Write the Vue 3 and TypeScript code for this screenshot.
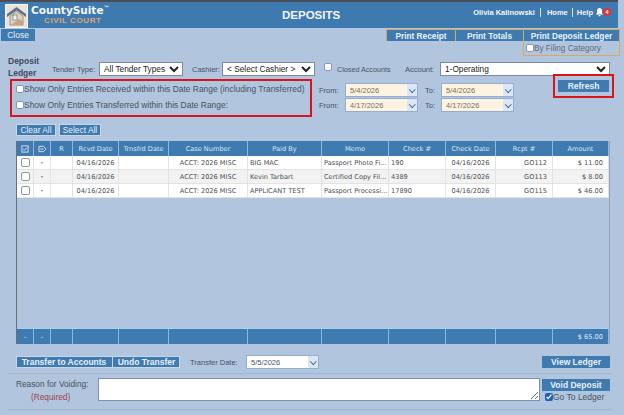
<script setup lang="ts">
const columns = [
  { label: "R", key: "r" },
  { label: "Rcvd Date", key: "rcvd" },
  { label: "Trnsfrd Date", key: "trnsfrd" },
  { label: "Case Number", key: "caseNo" },
  { label: "Paid By", key: "paidBy" },
  { label: "Memo", key: "memo" },
  { label: "Check #", key: "check" },
  { label: "Check Date", key: "checkDate" },
  { label: "Rcpt #", key: "rcpt" },
  { label: "Amount", key: "amount" },
]

const rows = [
  { id: 1, rcvd: "04/16/2026", caseNo: "ACCT: 2026 MISC", paidBy: "BIG MAC", memo: "Passport Photo Fi...", check: "190", checkDate: "04/16/2026", rcpt: "GO112", amount: "$ 11.00" },
  { id: 2, rcvd: "04/16/2026", caseNo: "ACCT: 2026 MISC", paidBy: "Kevin Tarbart", memo: "Certified Copy Fil...", check: "4389", checkDate: "04/16/2026", rcpt: "GO113", amount: "$ 8.00" },
  { id: 3, rcvd: "04/16/2026", caseNo: "ACCT: 2026 MISC", paidBy: "APPLICANT TEST", memo: "Passport Processi...", check: "17890", checkDate: "04/16/2026", rcpt: "GO115", amount: "$ 46.00" },
]

const dateRows = [
  { from: "5/4/2026", to: "5/4/2026" },
  { from: "4/17/2026", to: "4/17/2026" },
]
</script>

<template>
  <div class="page">
    <header class="topbar">
      <div class="brand">
        <svg class="logo" viewBox="0 0 23 24" width="23" height="24">
          <rect x="0.5" y="0.5" width="22" height="23" fill="#e9e4da" stroke="#f4f6f8" />
          <path d="M2 10 L11.5 3 L21 10 L21 13 L11.5 6.5 L2 13 Z" fill="#65727f" />
          <path d="M5 12 L11.5 7.5 L18 12 L18 21 L5 21 Z" fill="#e2d3bf" stroke="#7b818b" stroke-width="0.8" />
          <rect x="8" y="11" width="4" height="5" fill="#f6f3ec" stroke="#6d7480" stroke-width="0.7" />
          <path d="M6 21 L14 15 L18 17 L18 21 Z" fill="#c9a382" />
        </svg>
        <div class="brand-text">
          <div class="brand-name">CountySuite<sup>™</sup></div>
          <div class="brand-sub">CIVIL COURT</div>
        </div>
      </div>
      <div class="page-title">DEPOSITS</div>
      <nav class="usernav">
        <a>Olivia Kalinowski</a>
        <span class="sep"></span>
        <a>Home</a>
        <span class="sep sep-tight"></span>
        <a>Help</a>
        <svg class="bell" viewBox="0 0 10 11" width="9" height="10">
          <path d="M5 1 C7 1 7.8 2.6 7.8 4.5 L7.8 6.8 L9 8.2 L1 8.2 L2.2 6.8 L2.2 4.5 C2.2 2.6 3 1 5 1 Z" fill="#fff" />
          <rect x="4" y="8.8" width="2" height="1.4" fill="#fff" />
        </svg>
        <span class="badge">4</span>
      </nav>
    </header>

    <div class="toolbar">
      <button class="btn close-btn">Close</button>
      <div class="print-group">
        <div class="print-tabs">
          <button class="print-tab tab-receipt">Print Receipt</button>
          <button class="print-tab tab-totals">Print Totals</button>
          <button class="print-tab tab-ledger">Print Deposit Ledger</button>
        </div>
        <label class="filing"><input type="checkbox" />By Filing Category</label>
      </div>
    </div>

    <div class="filters">
      <div class="ledger-title">Deposit<br />Ledger</div>
      <label class="flabel tender-label">Tender Type:</label>
      <select class="sel tender"><option>All Tender Types</option></select>
      <label class="flabel cashier-label">Cashier:</label>
      <select class="sel cashier"><option>&lt; Select Cashier &gt;</option></select>
      <input class="closed-check" type="checkbox" />
      <label class="flabel closed-label">Closed Accounts</label>
      <label class="flabel account-label">Account:</label>
      <select class="sel account"><option>1-Operating</option></select>
    </div>

    <div class="range-row">
      <div class="red-box range-box">
        <label class="range-opt"><input type="checkbox" />Show Only Entries Received within this Date Range (including Transferred)</label>
        <label class="range-opt"><input type="checkbox" />Show Only Entries Transferred within this Date Range:</label>
      </div>
      <div class="dates">
        <div v-for="d in dateRows" :key="d.from" class="date-line">
          <span class="flabel from-label">From:</span>
          <div class="date-input"><span>{{ d.from }}</span><i class="chev"></i></div>
          <span class="flabel to-label">To:</span>
          <div class="date-input"><span>{{ d.to }}</span><i class="chev"></i></div>
        </div>
      </div>
      <div class="red-box refresh-box">
        <button class="btn refresh">Refresh</button>
      </div>
    </div>

    <div class="select-actions">
      <button class="btn outlined clear">Clear All</button>
      <button class="btn outlined select-all">Select All</button>
    </div>

    <section class="grid">
      <div class="grid-row grid-head">
        <div class="cell center">
          <svg viewBox="0 0 9 9" width="8" height="8"><rect x="1" y="1" width="7" height="7" fill="none" stroke="#dfe9f3" /><path d="M2.5 4.5 L4 6 L6.5 3" fill="none" stroke="#dfe9f3" /></svg>
        </div>
        <div class="cell center">
          <svg viewBox="0 0 10 9" width="9" height="8"><path d="M1 1.5 H6 L9 4.5 L6 7.5 H1 Z" fill="none" stroke="#dfe9f3" /><path d="M2.5 4.5 H6" stroke="#dfe9f3" /></svg>
        </div>
        <div v-for="c in columns" :key="c.key" class="cell center">{{ c.label }}</div>
      </div>
      <div v-for="r in rows" :key="r.id" class="grid-row grid-line">
        <div class="cell center"><input class="row-check" type="checkbox" /></div>
        <div class="cell center dot">·</div>
        <div class="cell"></div>
        <div class="cell center">{{ r.rcvd }}</div>
        <div class="cell"></div>
        <div class="cell center">{{ r.caseNo }}</div>
        <div class="cell">{{ r.paidBy }}</div>
        <div class="cell">{{ r.memo }}</div>
        <div class="cell">{{ r.check }}</div>
        <div class="cell center">{{ r.checkDate }}</div>
        <div class="cell right">{{ r.rcpt }}</div>
        <div class="cell right">{{ r.amount }}</div>
      </div>
      <div class="grid-row grid-foot">
        <div class="cell center">-</div>
        <div class="cell center">-</div>
        <div v-for="n in 9" :key="n" class="cell"></div>
        <div class="cell right">$ 65.00</div>
      </div>
    </section>

    <div class="transfer-row">
      <div class="transfer-btns">
        <button class="btn strong transfer">Transfer to Accounts</button>
        <button class="btn strong undo">Undo Transfer</button>
      </div>
      <label class="flabel transfer-label">Transfer Date:</label>
      <div class="date-input transfer-date"><span>5/5/2026</span><i class="chev"></i></div>
      <button class="btn strong view-ledger">View Ledger</button>
    </div>

    <div class="void-row">
      <div class="void-label">
        <div>Reason for Voiding:</div>
        <div class="required">(Required)</div>
      </div>
      <textarea class="void-text"></textarea>
      <div class="void-side">
        <button class="btn strong void-btn">Void Deposit</button>
        <label class="go-ledger"><input type="checkbox" checked />Go To Ledger</label>
      </div>
    </div>
  </div>
</template>

<style scoped>
.page {
  width: 624px;
  height: 415px;
  overflow: hidden;
  background: #b1c5de;
  font-family: "Liberation Sans", Arial, sans-serif;
  color: #44505f;
  display: flex;
  flex-direction: column;
}

button {
  border: 0;
  padding: 0;
  font-family: inherit;
  cursor: pointer;
}

input[type="checkbox"] {
  appearance: none;
  width: 8px;
  height: 8px;
  margin: 0;
  flex: none;
  background: #fff;
  border: 1px solid #8d97a5;
  border-radius: 2px;
  box-sizing: border-box;
}

/* top bar */
.topbar {
  height: 26px;
  margin-right: 6px;
  border-top: 2px solid #4b4f55;
  background: #3e7ab0;
  display: flex;
  align-items: center;
  flex: none;
}

.brand {
  display: flex;
  align-items: center;
  padding-left: 5px;
  width: 223px;
}

.logo {
  margin-top: 1px;
}

.brand-text {
  margin-left: 3px;
}

.brand-name {
  font-family: "DejaVu Sans", Verdana, sans-serif;
  font-size: 10.5px;
  font-weight: 700;
  line-height: 12px;
  color: #f3f7fb;
}

.brand-name sup {
  font-size: 6px;
  line-height: 0;
  vertical-align: 4px;
}

.brand-sub {
  margin-left: 13px;
  font-size: 8px;
  font-weight: 700;
  line-height: 10px;
  color: #d9a772;
  letter-spacing: 0.6px;
}

.page-title {
  margin-left: 54px;
  font-size: 11.5px;
  font-weight: 700;
  color: #f3f7fb;
}

.usernav {
  margin-left: auto;
  margin-right: 7px;
  margin-top: -6px;
  display: flex;
  align-items: center;
  font-size: 7.5px;
  font-weight: 700;
  color: #f3f7fb;
}

.sep {
  width: 1px;
  height: 9px;
  margin: 0 5.5px;
  background: #d9e4ef;
}

.sep-tight {
  margin: 0 4px;
}

.bell {
  margin-left: 2px;
}

.badge {
  width: 8px;
  height: 8px;
  margin-left: -1px;
  border-radius: 50%;
  background: #e0333a;
  color: #fff;
  font-size: 5.5px;
  line-height: 8px;
  text-align: center;
}

.btn {
  background: #3f7bb1;
  color: #e9f0f7;
  display: block;
}

/* close + print */
.toolbar {
  height: 28px;
  flex: none;
  display: flex;
  justify-content: space-between;
  padding: 1px 4px 0 1px;
  box-sizing: border-box;
}

.close-btn {
  width: 34px;
  height: 12px;
  font-size: 8.5px;
}

.print-group {
  width: 234px;
}

.print-tabs {
  display: flex;
  height: 12px;
}

.print-tab {
  background: #3f7bb1;
  color: #e9f0f7;
  font-size: 8.3px;
  font-weight: 700;
  border-left: 1px solid #d7a95e;
  border-top: 1px solid #d7a95e;
  box-sizing: border-box;
}

.tab-receipt { width: 69px; }
.tab-totals { width: 68px; }
.tab-ledger { width: 97px; border-right: 1px solid #d7a95e; }

.filing {
  display: flex;
  align-items: center;
  width: 97px;
  height: 15px;
  margin-left: 137px;
  padding-left: 2px;
  box-sizing: border-box;
  border: 1px solid #d7a95e;
  border-top: 0;
  font-size: 8.2px;
  color: #5b6a7c;
}

/* filter row */
.filters {
  height: 23px;
  flex: none;
  display: flex;
  align-items: flex-start;
  padding: 0 0 0 8px;
  box-sizing: border-box;
}

.ledger-title {
  width: 34px;
  margin-top: -1px;
  font-size: 8.5px;
  font-weight: 700;
  line-height: 12px;
  color: #3f4b5a;
}

.flabel {
  font-size: 7.5px;
  color: #47535f;
  white-space: nowrap;
}

.tender-label { margin: 9px 0 0 10px; width: 47px; }
.cashier-label { margin: 9px 0 0 9px; width: 30px; }
.closed-label { margin: 9px 0 0 5px; width: 68px; font-size: 7.2px; }
.account-label { margin: 9px 0 0 0; width: 35px; }

.sel {
  height: 14px;
  margin-top: 6px;
  padding: 0;
  border: 1px solid #7b8a9e;
  border-radius: 0;
  background-color: #fff;
  font-family: "Liberation Sans", Arial, sans-serif;
  font-size: 8.3px;
  color: #222;
  box-sizing: border-box;
}

.tender { width: 84px; }
.cashier { width: 93px; }
.account { width: 170px; }

.closed-check {
  margin: 7px 0 0 9px !important;
}

/* date range */
.range-row {
  height: 45px;
  flex: none;
  display: flex;
  align-items: flex-start;
  padding-left: 10px;
  box-sizing: border-box;
}

.red-box {
  border: 2px solid #d8141c;
  box-sizing: border-box;
}

.range-box {
  width: 302px;
  height: 38px;
  padding: 0 0 0 4px;
  display: flex;
  flex-direction: column;
  gap: 1px;
}

.range-opt {
  display: flex;
  align-items: center;
  height: 15px;
  font-size: 8.45px;
  color: #47535f;
  white-space: nowrap;
}

.dates {
  margin: 4px 0 0 7px;
  width: 195px;
  display: flex;
  flex-direction: column;
  gap: 1px;
}

.date-line {
  display: flex;
  align-items: center;
  height: 14px;
}

.from-label { width: 26px; }
.to-label { width: 16px; margin-left: 7px; }

.date-input {
  width: 73px;
  height: 14px;
  display: flex;
  align-items: center;
  justify-content: space-between;
  box-sizing: border-box;
  padding-left: 4px;
  border: 1px solid #93aed2;
  background: #fdf3e1;
  font-size: 7.5px;
  color: #77705f;
}

.chev {
  width: 10px;
  height: 12px;
  background: #dbe7f6;
  position: relative;
  display: block;
}

.chev::after {
  content: "";
  position: absolute;
  left: 2.5px;
  top: 2.5px;
  width: 3.5px;
  height: 3.5px;
  border-right: 1.5px solid #3d6ea5;
  border-bottom: 1.5px solid #3d6ea5;
  transform: rotate(45deg);
}

.refresh-box {
  width: 61px;
  height: 24px;
  margin: -5px 0 0 39px;
  padding: 4px 3px 0 3px;
}

.refresh {
  width: 51px;
  height: 12px;
  font-size: 8.5px;
  font-weight: 700;
}

/* clear / select */
.select-actions {
  height: 17px;
  flex: none;
  display: flex;
  gap: 3px;
  padding-left: 16px;
  box-sizing: border-box;
}

.outlined {
  height: 12px;
  font-size: 8.4px;
  outline: 1px solid #c7d7ea;
  outline-offset: -1px;
}

.clear { width: 40px; }
.select-all { width: 42px; }

/* table */
.grid {
  width: 594px;
  height: 203px;
  margin-left: 16px;
  flex: none;
  display: flex;
  flex-direction: column;
  box-sizing: border-box;
  border-left: 1px solid #66717f;
  border-right: 1px solid #95a2b3;
  background: #b1c5de;
  font-family: "DejaVu Sans", Verdana, sans-serif;
  font-size: 6.6px;
}

.grid-row {
  display: grid;
  grid-template-columns: 17px 17px 22px 46px 50px 79px 74px 67px 57px 50px 57px 1fr;
}

.grid-head {
  height: 15px;
  flex: none;
  background: #3f7bb1;
  color: #dbe7f2;
}

.grid-head .cell {
  border-right: 1px solid #8fb8dc;
  overflow: visible;
  white-space: nowrap;
}

.grid-line {
  height: 14px;
  flex: none;
  background: #fff;
  color: #4a4f55;
}

.grid-line:nth-of-type(3) {
  background: #f2f2f2;
}

.grid-line .cell {
  border-right: 1px solid #e3e3e3;
  border-bottom: 1px solid #e3e3e3;
}

.grid-foot {
  height: 15px;
  flex: none;
  margin-top: auto;
  background: #3f7bb1;
  color: #e1ebf4;
  border-top: 1px solid #a5d0f2;
}

.grid-foot .cell {
  border-right: 1px solid #8fb8dc;
}

.cell {
  display: flex;
  align-items: center;
  padding: 0 2px;
  box-sizing: border-box;
  overflow: hidden;
  white-space: nowrap;
}

.center { justify-content: center; }
.right { justify-content: flex-end; padding-right: 5px; }
.dot { font-weight: 700; }

.row-check {
  width: 9px !important;
  height: 9px !important;
}

/* transfer */
.transfer-row {
  width: 604px;
  height: 20px;
  margin: 10px 0 0 8px;
  flex: none;
  display: flex;
  align-items: center;
  padding: 0 2px 3px 8px;
  box-sizing: border-box;
  border-bottom: 1px solid #a3b6d0;
}

.transfer-btns {
  display: flex;
  outline: 1px solid #c7d7ea;
  outline-offset: -1px;
}

.strong {
  height: 12px;
  font-size: 8.5px;
  font-weight: 700;
}

.transfer { width: 96px; }
.undo { width: 68px; border-left: 1px solid #c7d7ea; }
.transfer-label { margin-left: 10px; width: 56px; }

.transfer-date {
  background: #fff;
  color: #47535f;
}

.view-ledger {
  margin-left: auto;
  width: 68px;
}

/* voiding */
.void-row {
  width: 604px;
  height: 36px;
  flex: none;
  display: flex;
  align-items: flex-start;
  margin-left: 8px;
  padding-top: 4px;
  box-sizing: border-box;
  border-bottom: 1px solid #a3b6d0;
}

.void-label {
  width: 90px;
  padding-left: 8px;
  box-sizing: border-box;
  font-size: 8.3px;
  line-height: 13px;
  color: #47535f;
  white-space: nowrap;
}

.required {
  margin-left: 15px;
  color: #a0424f;
}

.void-text {
  width: 442px;
  height: 23px;
  margin: 0;
  padding: 0;
  box-sizing: border-box;
  border: 1px solid #7f91aa;
  background: #fff;
}

.void-side {
  margin-left: 2px;
  width: 68px;
}

.void-btn {
  width: 68px;
  height: 12px;
  margin-top: 1px;
}

.go-ledger {
  display: flex;
  align-items: center;
  height: 10px;
  margin-top: 1px;
  padding-left: 3px;
  font-size: 8.5px;
  color: #47535f;
  white-space: nowrap;
}

.go-ledger input[type="checkbox"] {
  appearance: auto;
  accent-color: #1f5fc4;
  border: 0;
}
</style>

<style>
html, body {
  margin: 0;
  background: #b1c5de;
}
</style>
